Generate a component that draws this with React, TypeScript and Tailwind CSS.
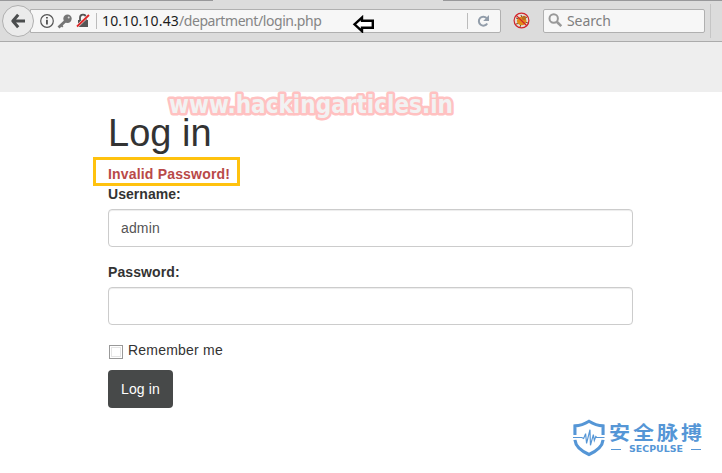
import React from "react";

function BackButton() {
  return (
    <button className="relative z-10 -mr-1 flex h-8 w-8 shrink-0 items-center justify-center rounded-full border border-[#b0b0b0] bg-[#ebebeb]" aria-label="Back">
      <svg width="16" height="16" viewBox="0 0 16 16" fill="none" stroke="#4b4d4e" strokeWidth="3">
        <path d="M8.2 1.800 2.8 8l5.400 6.200M3 8h12" strokeLinejoin="round" />
      </svg>
    </button>
  );
}

function IdentityIcons() {
  return (
    <svg className="shrink-0" width="52" height="16" viewBox="0 0 52 16">
      <circle cx="7" cy="8" r="6.3" fill="none" stroke="#555" strokeWidth="1.2" />
      <path d="M6.1 6.8h1.700V11.500H6.1zM6.1 4h1.700v1.600H6.1z" fill="#444" />
      <g stroke="#757575" fill="none">
        <path d="m26.500 7-8 7.500" strokeWidth="2.8" />
        <path d="m21 12 1.800 1.800" strokeWidth="1.800" />
      </g>
      <circle cx="27.500" cy="5.700" r="4.200" fill="#757575" />
      <circle cx="28.700" cy="4.500" r="1" fill="#d8d8d8" />
      <path d="M38 7h10v7H38z" fill="#555" />
      <path d="M40 7V4.700a3 3 0 0 1 6 0V7" fill="none" stroke="#555" strokeWidth="1.800" />
      <path d="M37 13.500 49 2" stroke="#f7f7f7" strokeWidth="3" />
      <path d="M37 13.500 49 2" stroke="#dc2828" strokeWidth="1.800" />
    </svg>
  );
}

function BugIcon() {
  return (
    <svg className="ml-[12px] shrink-0" width="17" height="17" viewBox="0 0 17 17">
      <circle cx="8.500" cy="8.500" r="7.400" fill="#e6dcd5" />
      <path d="m3 6 3 1m-3 5 4-1m1-8 1 3m5-1-3 2m4 4-3-1m-5 5 1-3" stroke="#705030" />
      <ellipse cx="8.700" cy="9" rx="4.800" ry="4.300" fill="#e18a19" />
      <circle cx="11" cy="6" r="2.200" fill="#b86e20" />
      <circle cx="8.500" cy="8.500" r="7.400" fill="none" stroke="#d2232a" strokeWidth="1.200" />
      <path d="m3.200 3.400 10.600 10.300" stroke="#d2232a" strokeWidth="1.300" />
    </svg>
  );
}

function Toolbar() {
  return (
    <header className="relative flex h-[42px] items-center border-b border-[#ababab] bg-[#dcdcdc] pl-[2px] font-['Noto_Sans','Open_Sans',sans-serif] text-[14px]">
      <div className="absolute left-0 top-0 h-px w-[213px] bg-[#98989a]" />
      <div className="absolute left-[443px] top-0 h-px w-[279px] bg-[#98989a]" />
      <BackButton />
      <div className="flex h-6 w-[471px] shrink-0 items-center rounded-r-[2px] border border-[#b0b0b0] bg-[#f7f7f7] pl-[9px]">
        <IdentityIcons />
        <div className="ml-[4px] h-4 w-px shrink-0 bg-[#bcbcbc]" />
        <span className="ml-[5px] whitespace-nowrap text-[#858585]">
          <span className="tracking-[0.150px] text-[#1c1c1c]">10.10.10.43</span>
          <span className="tracking-[-0.430px]">/department/login.php</span>
        </span>
        <svg className="absolute left-[352px] top-[15px]" width="23" height="18" viewBox="0 0 23 18">
          <path d="M2.500 9.300 10 2.500v3.300h10.800v7H10v3.400Z" fill="#fff" stroke="#000" strokeWidth="2.400" />
        </svg>
        <div className="ml-auto h-4 w-px bg-[#bcbcbc]" />
        <svg className="ml-[9px] mr-[10px]" width="13" height="14" viewBox="0 0 13 14">
          <path d="M10.200 9.500A4.500 4.500 0 1 1 9.600 4" fill="none" stroke="#929daa" strokeWidth="2" />
          <path d="M12 1v6H6.200Z" fill="#929daa" />
        </svg>
      </div>
      <BugIcon />
      <div className="ml-[13px] flex h-6 w-[162px] items-center rounded-[2px] border border-[#b0b0b0] bg-[#f7f7f7] pl-[4px]">
        <svg width="15" height="15" viewBox="0 0 15 15" fill="none" stroke="#999">
          <circle cx="5.700" cy="5.500" r="4.200" strokeWidth="2" />
          <path d="m8.800 8.700 4.500 4.400" strokeWidth="2.600" />
        </svg>
        <span className="ml-[4px] tracking-[-0.100px] text-[#808080]">Search</span>
      </div>
      <div className="ml-[5px] h-[34px] w-px bg-[#c5c5c5]" />
    </header>
  );
}

function Brand() {
  return (
    <div className="absolute left-[573px] top-[418px] flex text-[#5596d6]">
      <svg width="32" height="39" viewBox="0 0 33 39" fill="none" stroke="#5596d6">
        <path d="M2 17V7.500C8 7.200 12 5.500 16.500 2.700 21 5.500 25 7.200 31 7.500V17M2 22c.6 6.500 6.500 11.500 14.500 15C24.500 33.500 30.400 28.500 31 22" strokeWidth="3.200" />
        <path d="M0 19.500h9l2 1 2-5 1 10 3.500-14 .5 16 3-11 1 6 1.500-4 1 1h8" strokeWidth="1.200" />
      </svg>
      <div className="pl-[4px] pt-[3px]">
        <div className="h-[23px] scale-y-90 whitespace-nowrap font-['Noto_Sans_CJK_SC',sans-serif] text-[21px] font-bold leading-[23px] tracking-[3px]">安全脉搏</div>
        <div className="flex items-center pl-[2px] pt-[1px]">
          <i className="h-px w-[10px] bg-[#5596d6]" />
          <svg className="mx-[8px]" width="54" height="8">
            <text x="0" y="7" textLength="54" lengthAdjust="spacingAndGlyphs" fill="#5596d6" className="font-['DejaVu_Sans',sans-serif] text-[8.500px] font-bold">SECPULSE</text>
          </svg>
          <i className="h-px w-[10px] bg-[#5596d6]" />
        </div>
      </div>
    </div>
  );
}

export default function App() {
  return (
    <div className="relative h-[473px] w-[722px] overflow-hidden bg-white font-['Liberation_Sans',Arial,sans-serif] text-[14px] leading-5 text-[#333]">
      <Toolbar />
      <div className="h-[50px] bg-[#eee]" />
      <main className="ml-[108px] w-[525px] pt-[20px]">
        <h1 className="h-[52px] text-[38px] leading-[42px]">Log in</h1>
        <div className="relative font-bold">
          <div className="absolute -left-[15px] -top-[7px] h-[29px] w-[147px] border-[3px] border-[#ffc20e]" />
          <p className="tracking-[0.180px] text-[#b94a48]">Invalid Password!</p>
        </div>
        <form onSubmit={(e) => e.preventDefault()}>
          <label htmlFor="username" className="block font-bold tracking-[0.050px]">Username:</label>
          <input id="username" defaultValue="admin" className="mb-[15px] mt-[5px] block h-[38px] w-full rounded-[4px] border border-[#ccc] bg-white px-3 tracking-[0.150px] text-[#555] shadow-[inset_0_1px_1px_#00000013]" />
          <label htmlFor="password" className="block font-bold tracking-[0.100px]">Password:</label>
          <input id="password" type="password" className="mb-[15px] mt-[5px] block h-[38px] w-full rounded-[4px] border border-[#ccc] bg-white px-3 shadow-[inset_0_1px_1px_#00000013]" />
          <label className="flex h-5 items-start">
            <input type="checkbox" className="ml-px mt-[5px] h-[14px] w-[14px] shrink-0 appearance-none border border-[#999] bg-white shadow-[inset_0_0_0_1px_#fff,inset_0_0_0_2px_#e5e5e5]" />
            <span className="ml-[5px] tracking-[0.220px]">Remember me</span>
          </label>
          <button className="mt-[10px] h-[38px] w-[65px] rounded-[4px] bg-[#474949] tracking-[0.150px] text-white">Log in</button>
        </form>
      </main>
      <svg className="absolute left-[160px] top-[85px]" width="305" height="40">
        <text x="9" y="27.500" textLength="284" lengthAdjust="spacingAndGlyphs" className="font-['DejaVu_Sans_Condensed','DejaVu_Sans',sans-serif] text-[24px] font-bold" fill="#f2f2f2" stroke="#ffc1c1" strokeWidth="5" strokeLinejoin="round" paintOrder="stroke">www.hackingarticles.in</text>
      </svg>
      <Brand />
    </div>
  );
}
